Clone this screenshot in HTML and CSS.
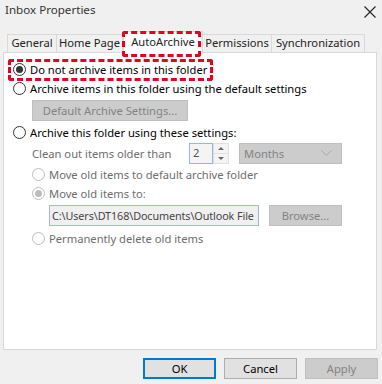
FILE: index.html
```html
<!DOCTYPE html>
<html lang="en">
<head>
  <meta charset="UTF-8" />
  <title>Inbox Properties</title>
  <link rel="stylesheet" href="styles.css">
</head>
<body>
  <div class="dialog">
    <!-- Barra de titulo -->
    <div class="titlebar">
      <span class="title">Inbox Properties</span>
      <svg class="close" width="12" height="12" viewBox="0 0 12 12">
        <path d="M0.5 0.5 L11.5 11.5 M11.5 0.5 L0.5 11.5" stroke="#222" stroke-width="1.1" fill="none"/>
      </svg>
    </div>

    <!-- Abas -->
    <div class="tabs">
      <div class="tab t-general">General</div>
      <div class="tab t-home">Home Page</div>
      <div class="tab active">AutoArchive</div>
      <div class="tab t-perm">Permissions</div>
      <div class="tab t-sync">Synchronization</div>
      <span class="mark mark-tab"></span>
    </div>

    <!-- Painel -->
    <div class="panel">
      <span class="mark mark-opt"></span>

      <label class="opt">
        <span class="radio checked"></span>Do not archive items in this folder
      </label>
      <label class="opt">
        <span class="radio"></span>Archive items in this folder using the default settings
      </label>
      <div class="btn disabled default-btn">Default Archive Settings...</div>
      <label class="opt opt-3">
        <span class="radio"></span>Archive this folder using these settings:
      </label>

      <div class="clean-row">
        <span class="muted clean-label">Clean out items older than</span>
        <div class="spin">
          <span class="spin-input">2</span>
          <span class="spin-btns">
            <span class="arrow up"></span>
            <span class="arrow down"></span>
          </span>
        </div>
        <div class="combo">
          <span>Months</span>
          <svg width="11" height="7" viewBox="0 0 11 7">
            <path d="M0.5 0.5 L5.5 5.5 L10.5 0.5" stroke="#a8a8a8" fill="none"/>
          </svg>
        </div>
      </div>

      <label class="opt sub first-sub">
        <span class="radio off"></span><span class="muted">Move old items to default archive folder</span>
      </label>
      <label class="opt sub">
        <span class="radio off checked"></span><span class="muted">Move old items to:</span>
      </label>
      <div class="path-row">
        <div class="path">C:\Users\DT168\Documents\Outlook File</div>
        <div class="btn disabled browse">Browse...</div>
      </div>
      <label class="opt sub last-sub">
        <span class="radio off"></span><span class="muted">Permanently delete old items</span>
      </label>
    </div>

    <!-- Botoes -->
    <div class="footer">
      <div class="btn ok">OK</div>
      <div class="btn">Cancel</div>
      <div class="btn disabled">Apply</div>
    </div>
  </div>
</body>
</html>
```

FILE: styles.css
```css
:root {
  --bg:        #f0f0f0;
  --line:      #d9d9d9;
  --dis-bg:    #cccccc;
  --dis-line:  #bfbfbf;
  --dis-text:  #838383;
  --muted:     #6d6d6d;
  --red:       #e8001c;
  --blue:      #0078d7;
}

* { box-sizing: border-box; margin: 0; padding: 0; }
html, body { height: 100%; }

body {
  background: var(--bg);
  font-family: "Segoe UI", "Noto Sans", Arial, sans-serif;
  font-size: 11.2px;
  color: #000;
}

.dialog {
  width: 382px;
  height: 384px;
  display: flex;
  flex-direction: column;
}

/* === TITULO === */
.titlebar {
  height: 31px;
  display: flex;
  align-items: flex-start;
  justify-content: space-between;
  padding: 2px 6px 0 5px;
}
.title { color: #333; font-size: 11.6px; }
.close { margin-top: 4px; }

/* === ABAS === */
.tabs {
  position: relative;
  display: flex;
  align-items: flex-end;
  height: 21px;
  padding-left: 7px;
}
.tab {
  height: 18px;
  line-height: 16px;
  text-align: center;
  border: 1px solid var(--line);
  border-bottom: none;
  border-left: none;
  background: var(--bg);
  color: #222;
  white-space: nowrap;
}
.t-general { width: 50px; border-left: 1px solid var(--line); }
.t-home    { width: 66px; }
.t-perm    { width: 69px; }
.t-sync    { width: 93px; }
.tab.active {
  width: 80px;
  height: 22px;
  line-height: 19px;
  margin-bottom: -1px;
  background: #fff;
  border-left: 1px solid var(--line);
  position: relative;
  z-index: 1;
}

/* marcacoes vermelhas */
.mark {
  position: absolute;
  border: 3px dashed var(--red);
  border-radius: 3px;
  z-index: 2;
}
.mark-tab { left: 122px; top: 0; width: 79px; height: 26px; }
.mark-opt { left: 4px; top: 6px; width: 205px; height: 22px; }

/* === PAINEL === */
.panel {
  position: relative;
  margin: 0 5px 0 3px;
  height: 298px;
  background: #fff;
  border: 1px solid var(--line);
  padding: 7px 0 0 9px;
}

.opt {
  display: flex;
  align-items: center;
  height: 19px;
  white-space: nowrap;
}
.opt-3 { margin-top: 2px; }

.radio {
  width: 13px;
  height: 13px;
  border: 1px solid #333;
  border-radius: 50%;
  background: #fff;
  margin-right: 4px;
  flex-shrink: 0;
  display: flex;
  align-items: center;
  justify-content: center;
}
.radio.checked::after {
  content: "";
  width: 7px;
  height: 7px;
  border-radius: 50%;
  background: #333;
}
.radio.off { border-color: #bcbcbc; }
.radio.off.checked::after { background: #bcbcbc; }

.muted { color: var(--muted); }

.btn {
  height: 21px;
  display: flex;
  align-items: center;
  justify-content: center;
  background: #e1e1e1;
  border: 1px solid #adadad;
  color: #000;
}
.btn.disabled {
  background: var(--dis-bg);
  border-color: var(--dis-line);
  color: var(--dis-text);
}
.default-btn {
  width: 156px;
  margin: 2px 0 0 19px;
}

.clean-row {
  display: flex;
  align-items: center;
  height: 21px;
  margin: 1px 0 0 19px;
}
.clean-label { width: 157px; }
.spin {
  display: flex;
  height: 21px;
}
.spin-input {
  width: 24px;
  border: 1px solid #98b4e0;
  background: #f4f4f4;
  color: #555;
  padding-left: 3px;
  line-height: 18px;
}
.spin-btns {
  width: 16px;
  display: flex;
  flex-direction: column;
  background: #f4f4f4;
  border: 1px solid #e0e0e0;
}
.arrow {
  flex: 1;
  display: flex;
  align-items: center;
  justify-content: center;
}
.arrow::after {
  content: "";
  border-left: 3px solid transparent;
  border-right: 3px solid transparent;
}
.arrow.up::after { border-bottom: 3px solid #666; }
.arrow.down::after { border-top: 3px solid #666; }
.arrow.up { border-bottom: 1px solid #e0e0e0; }

.combo {
  width: 103px;
  height: 21px;
  margin-left: 10px;
  background: var(--dis-bg);
  border: 1px solid var(--dis-line);
  color: var(--dis-text);
  display: flex;
  align-items: center;
  justify-content: space-between;
  padding: 0 9px 0 4px;
}

.sub { padding-left: 19px; }
.first-sub { margin-top: 1px; }

.path-row {
  display: flex;
  height: 21px;
  margin: 2px 0 0 36px;
}
.path {
  width: 210px;
  flex-shrink: 0;
  border: 1px solid #a4b8d8;
  background: #f0f0f0;
  color: #444;
  padding-left: 2px;
  font-size: 10.8px;
  letter-spacing: -0.1px;
  line-height: 19px;
  white-space: nowrap;
  overflow: hidden;
}
.browse {
  width: 73px;
  margin-left: 10px;
}
.last-sub { margin-top: 3px; }

/* === RODAPE === */
.footer {
  display: flex;
  justify-content: flex-end;
  gap: 8px;
  padding: 8px 4px 0 0;
}
.footer .btn {
  width: 73px;
  height: 21px;
}
.footer .ok {
  border: 2px solid var(--blue);
}
```
